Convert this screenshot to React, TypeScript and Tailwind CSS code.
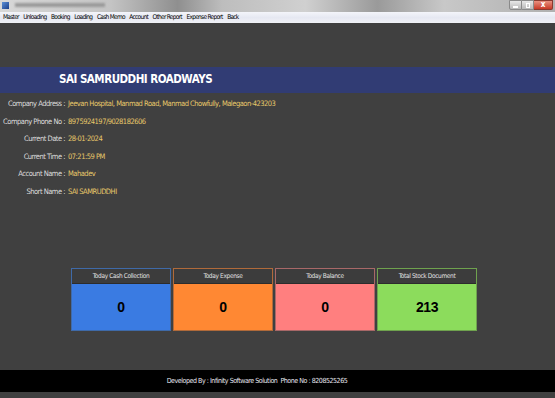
import React from "react"

const menu = ["Master", "Unloading", "Booking", "Loading", "Cash Memo", "Account", "Other Report", "Expense Report", "Back"]

const info = [
  ["Company Address", "Jeevan Hospital, Manmad Road, Manmad Chowfully, Malegaon-423203"],
  ["Company Phone No", "8975924197/9028182606"],
  ["Current Date", "28-01-2024"],
  ["Current Time", "07:21:59 PM"],
  ["Account Name", "Mahadev"],
  ["Short Name", "SAI SAMRUDDHI"],
]

const cards = [
  { title: "Today Cash Collection", value: "0", body: "bg-[#3a7be2]", border: "border-[#3f6aa8]" },
  { title: "Today Expense", value: "0", body: "bg-[#ff8833]", border: "border-[#b06a3a]" },
  { title: "Today Balance", value: "0", body: "bg-[#ff7f7f]", border: "border-[#a86868]" },
  { title: "Total Stock Document", value: "213", body: "bg-[#8cdc5c]", border: "border-[#6fa24e]" },
]

export default function App() {
  return (
    <div className="w-[555px] h-[398px] bg-[#404040] flex flex-col overflow-hidden font-['DejaVu_Sans_Condensed','DejaVu_Sans',sans-serif]">
      {/* window title bar */}
      <div className="h-[12px] flex items-start bg-[linear-gradient(90deg,#d8d8d8_0%,#c4c4c4_20%,#8f8f8f_32%,#bdbdbd_40%,#d0d0d0_55%,#9a9a9a_68%,#c8c8c8_80%,#b0b0b0_100%)]">
        <div className="w-[7px] h-[7px] mt-[2px] ml-[2px] bg-[linear-gradient(135deg,#5b8fd6,#1c3f8a)]" />
        <div className="ml-[6px] mt-[3px] w-[90px] h-[4px] bg-[#9a9a9a] blur-[1px]" />
        <div className="flex-1" />
        <div className="flex h-[10px] mr-[2px]">
          <div className="w-[13px] h-[10px] border border-[#8a8a8a] rounded-bl-[2px] bg-[linear-gradient(180deg,#e8e8e8,#b8b8b8)] flex items-center justify-center">
            <div className="w-[5px] h-[2px] bg-white mt-[3px]" />
          </div>
          <div className="w-[12px] h-[10px] border-y border-r border-[#8a8a8a] bg-[linear-gradient(180deg,#e8e8e8,#b8b8b8)] flex items-center justify-center">
            <div className="w-[4px] h-[5px] border border-white" />
          </div>
          <div className="w-[19px] h-[10px] border-y border-r border-[#8a3a30] rounded-br-[2px] bg-[linear-gradient(180deg,#e89080,#c83a28)] flex items-center justify-center text-white text-[8px] leading-none font-bold">
            x
          </div>
        </div>
      </div>

      {/* menu bar */}
      <div className="h-[11px] bg-[linear-gradient(180deg,#f4f5fa_0%,#e6e8f2_50%,#f0f1f6_100%)] flex items-center pl-[3px] gap-[4.5px] text-[6.5px] tracking-[-0.7px] leading-none text-black">
        {menu.map((m) => (
          <span key={m}>{m}</span>
        ))}
      </div>

      <div className="h-[44px]" />

      {/* company band */}
      <div className="h-[26px] bg-[#313c74] flex items-center pl-[59px]">
        <span className="text-white text-[11.5px] tracking-[-0.5px] font-semibold">SAI SAMRUDDHI ROADWAYS</span>
      </div>

      {/* info rows */}
      <div className="mt-[2px] flex flex-col">
        {info.map(([label, value]) => (
          <div key={label} className="h-[17.5px] flex items-center text-[7.5px] tracking-[-0.5px] leading-none">
            <span className="w-[65px] text-right text-[#dcdcdc] whitespace-nowrap">{label} :</span>
            <span className="ml-[3px] text-[#e8c86a] whitespace-nowrap">{value}</span>
          </div>
        ))}
      </div>

      <div className="flex-1" />

      {/* summary cards */}
      <div className="flex gap-[2px] pl-[71px] mb-[39px]">
        {cards.map((c) => (
          <div key={c.title} className={`w-[100px] h-[63px] border ${c.border} flex flex-col`}>
            <div className="h-[15px] bg-[#3c3c3c] border-b border-[#2c2c2c] flex items-center justify-center text-[6.5px] tracking-[-0.35px] text-[#e0e0e0] leading-none">
              {c.title}
            </div>
            <div className={`flex-1 ${c.body} flex items-center justify-center text-[14px] tracking-[-0.5px] font-bold text-black font-['Liberation_Sans',sans-serif]`}>
              {c.value}
            </div>
          </div>
        ))}
      </div>

      {/* footer */}
      <div className="h-[22px] bg-black flex items-center justify-center pr-[41px] text-[7px] tracking-[-0.45px] text-[#e8e8f0] leading-none whitespace-pre">
        Developed By : Infinity Software Solution  Phone No : 8208525265
      </div>
      <div className="h-[6px]" />
    </div>
  )
}
